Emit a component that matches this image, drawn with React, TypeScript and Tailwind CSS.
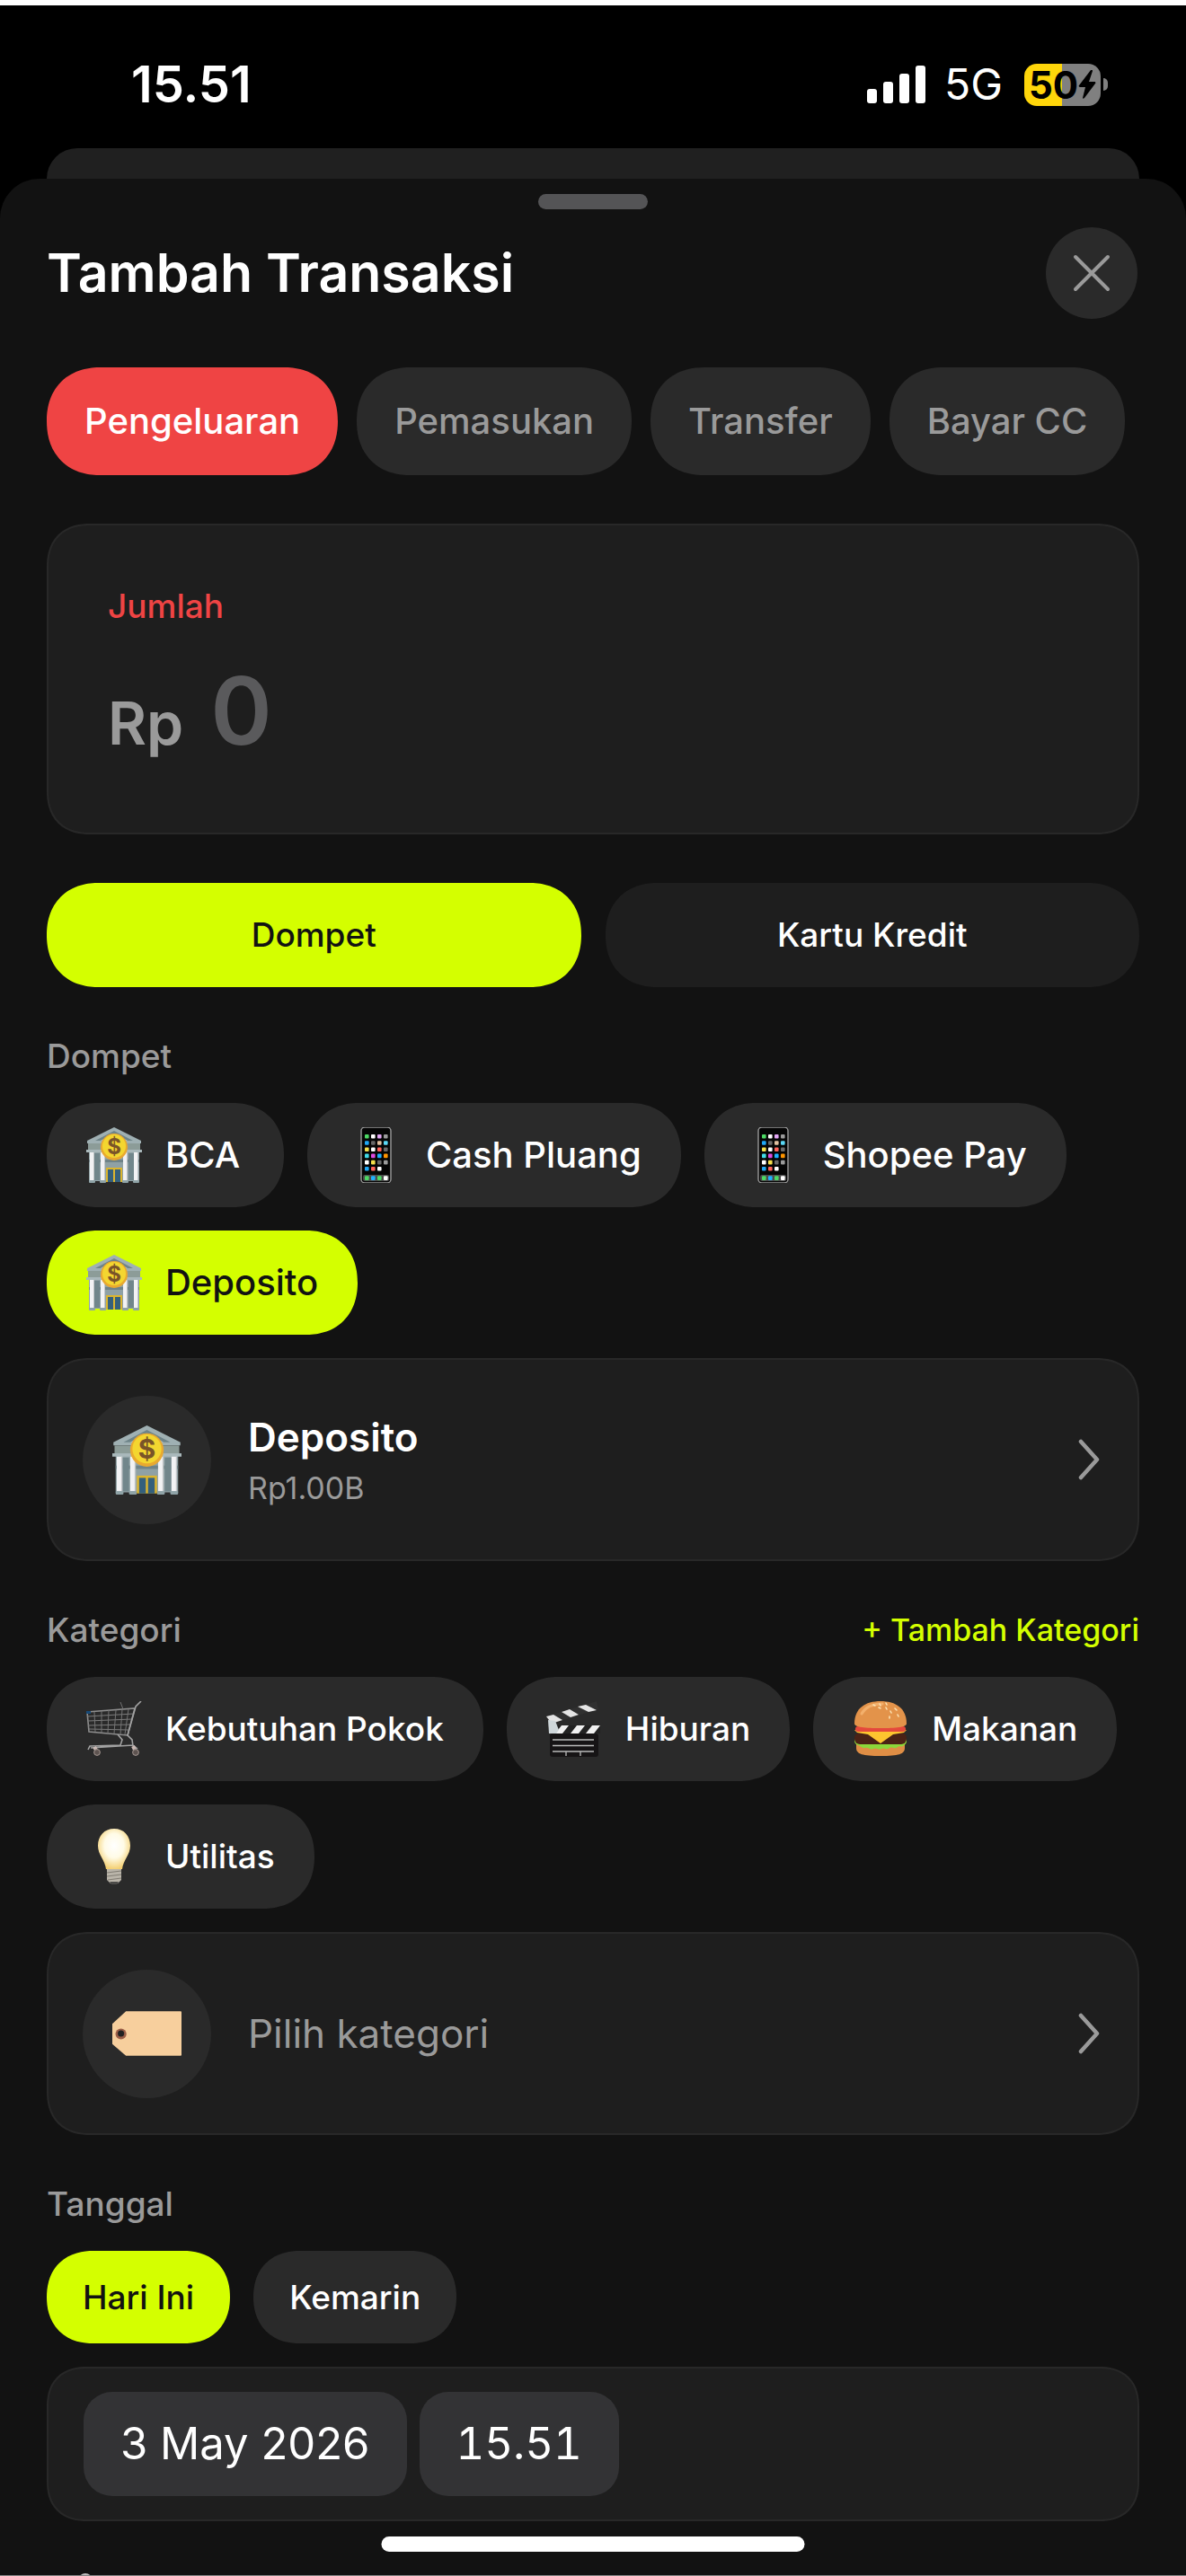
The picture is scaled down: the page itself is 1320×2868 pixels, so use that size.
import React, { useState } from 'react';

const FONT = 'font-["Inter","Liberation_Sans",sans-serif]';

const BankIcon = ({ className }: { className?: string }) => (
  <svg viewBox="0 0 62 62" className={className} aria-hidden="true">
    <rect x="3" y="27" width="56" height="33" fill="#8fa1a5" />
    <rect x="3" y="36" width="56" height="3" fill="#6f8388" />
    <rect x="9" y="29" width="6" height="30" fill="#71868b" />
    <rect x="47" y="29" width="6" height="30" fill="#71868b" />
    <path d="M31 0 61 15v3H1v-3Z" fill="#9fb0b3" />
    <path d="M31 4 52 15H10Z" fill="#6e8489" />
    <path d="M31 7 46 15H16Z" fill="#b9c7c9" />
    <rect x="2" y="18" width="58" height="8" fill="#8c9c98" />
    <rect x="0" y="25" width="62" height="3" fill="#a9b8bb" />
    {[4, 16, 41, 53].map((x) => (
      <g key={x}>
        <rect x={x} y="28" width="5" height="31" fill="#f2f2f4" />
        <rect x={x + 4} y="28" width="1" height="31" fill="#c3c6c9" />
        <rect x={x - 1} y="59" width="7" height="3" rx="1" fill="#8fa3a7" />
      </g>
    ))}
    <rect x="22" y="45" width="18" height="16" fill="#dcb52e" />
    <rect x="24" y="47" width="6" height="14" fill="#34607c" />
    <rect x="32" y="47" width="6" height="14" fill="#34607c" />
    <circle cx="31" cy="22" r="15" fill="#e9a92f" />
    <circle cx="31" cy="21" r="13" fill="#f3d630" />
    <text x="31" y="30" textAnchor="middle" fontSize="24" fontWeight="700" fill="#7a5428">$</text>
  </svg>
);

const APP_ROWS = [
  ['#4cd964', '#fff', '#e3a6f5', '#9b9b9b'],
  ['#1fa7f5', '#666', '#e0c0a0', '#5ad8f5'],
  ['#f6e04b', '#fff', '#ff6259', '#6b6b6b'],
  ['#41dbe8', '#e04be0', '#1fb0ff', '#ff9500'],
  ['#fff', '#f6e04b', '#666', '#9b9b9b'],
  ['#1fa7f5', '#ff6259', '#fff'],
];

const PhoneIcon = ({ className }: { className?: string }) => (
  <svg viewBox="-15 0 62 62" className={className} aria-hidden="true">
    <rect x="1" y="0" width="33" height="62" rx="4" fill="#050505" stroke="#9b9b9b" strokeWidth="1.4" />
    <rect x="3" y="53" width="29" height="7" rx="2" fill="#4a4a4a" />
    {APP_ROWS.map((row, r) =>
      row.map((color, c) => (
        <rect key={`${r}-${c}`} x={5 + c * 7} y={8 + r * 7.2} width="4.6" height="4.6" rx="1" fill={color} />
      ))
    )}
    {['#4cd964', '#1fb0ff', '#4cd964', '#fff'].map((color, c) => (
      <rect key={c} x={5 + c * 7} y="54.3" width="4.6" height="4.6" rx="1" fill={color} />
    ))}
  </svg>
);

const CartIcon = ({ className }: { className?: string }) => (
  <svg viewBox="0 0 62 62" className={className} fill="none" aria-hidden="true">
    <path d="M1 12 54 8 46 38 3 34Z" stroke="#8d8d8d" strokeWidth="1.6" />
    <path d="M1 17 53 14M2 22 51 20M2 27 50 26M3 31 48 32" stroke="#7c7c7c" strokeWidth="1.1" />
    <path d="M9 12 10 34M17 11 17 35M25 10 24 36M33 10 31 36M40 9 38 37M47 9 43 37M38 1l3 8" stroke="#747474" strokeWidth="1" />
    <path d="M61 0 55 6 46 38 51 43 52 50M35 37 40 43 38 49 4 50 2 54M5 52 52 49 57 53" stroke="#a2a2a2" strokeWidth="1.6" />
    <rect x="0" y="11" width="5" height="3" fill="#164a78" />
    <path d="M9 51 12 56M52 50 55 56" stroke="#c9b8b3" strokeWidth="4" />
    <circle cx="12" cy="57" r="3.4" fill="#5d5350" stroke="#a39691" />
    <circle cx="55" cy="57" r="3.4" fill="#5d5350" stroke="#a39691" />
  </svg>
);

const ClapperIcon = ({ className }: { className?: string }) => (
  <svg viewBox="0 0 62 62" className={className} aria-hidden="true">
    <path d="M0 17 56 0 58 9 6 25Z" fill="#303030" />
    <path d="M0 17 8 15 18 21 6 25ZM17 12 26 9 36 15 27 18ZM35 6 44 4 56 10 47 12Z" fill="#e4e4e4" />
    <rect x="4" y="27" width="56" height="9" fill="#222" />
    <path d="M17 27h8l-7 9h-8ZM34 27h9l-7 9h-9ZM51 27h9l-7 9h-9Z" fill="#f1f1f1" />
    <path d="M2 21 10 22 14 32 11 36H3Z" fill="#cfd7da" />
    <rect x="4" y="36" width="54" height="26" rx="3" fill="#161415" />
    <path d="M7 43h46M7 49.5h46M7 56h46M22 56v5M38 56v5" stroke="#bbb" strokeWidth="1.3" />
  </svg>
);

const BurgerIcon = ({ className }: { className?: string }) => (
  <svg viewBox="-2 0 62 62" className={className} aria-hidden="true">
    <path d="M2 46h54v6c0 7-7 9-27 9S2 59 2 52Z" fill="#df8e45" />
    <path d="M1 41h56c2 3 1 7-2 8-2 3-5 0-7 2-3 3-6-1-9 1-3 3-6-1-9 1-3 2-6-2-9 0-3 2-6-2-9-1-3 1-5-2-8-3-4-1-5-5-3-8Z" fill="#8bd83a" />
    <rect x="0" y="35" width="58" height="13" rx="6" fill="#4a2216" />
    <path d="M0 32h58l-3 3-12 2-14 10-14-10-12-2Z" fill="#fdc52f" />
    <rect x="1" y="28" width="56" height="6" rx="3" fill="#e5483c" />
    <path d="M0 25C0 8 12 0 29 0s29 8 29 25c0 4-12 5-29 5S0 29 0 25Z" fill="#e3934a" />
    <path d="M8 14C13 5 22 3 31 3" stroke="#f3b06c" strokeWidth="3" fill="none" strokeLinecap="round" />
    <path d="m21 4 2 1m5-2 1 2m6-3 1 2m-9 3 2 1m6-1 1 2m4 2 1 2m4-5 2 2m-8 7v2m9-4 1 2" stroke="#fbe1b2" strokeWidth="1.6" strokeLinecap="round" />
  </svg>
);

const BulbIcon = ({ className }: { className?: string }) => (
  <svg viewBox="-12 0 62 62" className={className} aria-hidden="true">
    <defs>
      <radialGradient id="bulb-glow" cx="50%" cy="42%" r="60%">
        <stop offset="0" stopColor="#fff" />
        <stop offset="0.5" stopColor="#fffbe6" />
        <stop offset="1" stopColor="#f3cd6c" />
      </radialGradient>
    </defs>
    <path d="M19 0c11 0 18 8 18 19 0 10-8 16-9 26H10C9 35 1 29 1 19 1 8 8 0 19 0Z" fill="url(#bulb-glow)" />
    <path d="M11 45h16v12l-4 4h-8l-4-4Z" fill="#b9b4a9" />
    <path d="m11 49 16-2m-16 6 16-2m-15 6 15-2" stroke="#827d74" strokeWidth="1.2" />
    <path d="M14 59h10l-2 3h-6Z" fill="#4b4a48" />
  </svg>
);

const TagIcon = ({ className }: { className?: string }) => (
  <svg viewBox="0 0 76 76" className={className} aria-hidden="true">
    <path d="M15 13h60a1 1 0 0 1 1 1v47a1 1 0 0 1-1 1H15L0 49V27Z" fill="#f7cf9d" />
    <circle cx="9.5" cy="38" r="6" fill="#9c5f48" />
    <circle cx="9.5" cy="37.5" r="3.5" fill="#222" />
  </svg>
);

const ChevronRight = () => (
  <svg viewBox="0 0 24 46" className="h-[46px] w-[24px]" fill="none" stroke="#9a9a9a" strokeWidth="4.5" strokeLinecap="round" strokeLinejoin="round" aria-hidden="true">
    <path d="M3 3 21 23 3 43" />
  </svg>
);

const StatusBar = () => (
  <header className="flex h-[159px] shrink-0 items-center justify-between pt-[17px] pr-[87px] pl-[146px] text-white">
    <span className="text-[56px] leading-[64px] font-semibold">15.51</span>
    <div className="flex items-center">
      <svg viewBox="0 0 66 42" className="h-[42px] w-[66px]" fill="#fff" aria-hidden="true">
        <rect x="0" y="26" width="11" height="16" rx="3" />
        <rect x="18" y="18" width="11" height="24" rx="3" />
        <rect x="36" y="9" width="11" height="33" rx="3" />
        <rect x="54" y="0" width="11" height="42" rx="3" />
      </svg>
      <span className="ml-5 text-[48px] leading-[56px]">5G</span>
      <div className="ml-6 flex h-[47px] w-[85px] items-center justify-center rounded-[14px] bg-[linear-gradient(90deg,#ffd60a_50%,#808080_50%)] text-[42px] leading-[47px] font-bold text-black">
        50
        <svg viewBox="0 0 20 32" className="h-[32px] w-[20px]" aria-hidden="true">
          <path d="M14 0 1 17c-1 1 0 2 1 2h6L5 31c0 1 1 1 2 0L19 15c1-1 0-2-1-2h-6l4-12c0-1-1-2-2-1Z" />
        </svg>
      </div>
      <span className="ml-[3px] h-[14px] w-[5px] rounded-r-full bg-[#808080]" />
    </div>
  </header>
);

interface ChipProps {
  label: string;
  icon?: React.FC<{ className?: string }>;
  active?: boolean;
  large?: boolean;
  onClick: () => void;
}

const IconChip: React.FC<ChipProps> = ({ label, icon: Icon, active, large, onClick }) => (
  <button
    type="button"
    aria-pressed={active}
    onClick={onClick}
    className={`flex h-[116px] min-w-[264px] items-center gap-[26px] rounded-full px-[44px] font-medium [corner-shape:superellipse(1.15)] ${
      large ? 'text-[40px]' : 'text-[37px]'
    } ${active ? 'bg-[#d4ff00] text-[#121212]' : 'bg-[#2a2a2a] text-white'}`}
  >
    {Icon && <Icon className="size-[62px]" />}
    {label}
  </button>
);

interface PickerRowProps {
  icon: React.FC<{ className?: string }>;
  title: string;
  subtitle?: string;
}

const PickerRow: React.FC<PickerRowProps> = ({ icon: Icon, title, subtitle }) => (
  <button
    type="button"
    className="mt-[26px] flex h-[226px] w-full items-center rounded-[48px] border-2 border-[#282828] bg-[#1e1e1e] pr-[42px] pl-[38px] text-left [corner-shape:superellipse(1.2)]"
  >
    <span className="flex size-[143px] items-center justify-center rounded-full bg-[#2a2a2a]">
      <Icon className="size-[77px]" />
    </span>
    <span className="ml-[41px] flex flex-1 flex-col">
      {subtitle ? (
        <>
          <span className="pt-1 text-[44px] leading-[60px] font-semibold text-white">{title}</span>
          <span className="text-[34px] leading-[54px] text-[#9a9a9a]">{subtitle}</span>
        </>
      ) : (
        <span className="text-[44px] leading-[60px] text-[#9a9a9a]">{title}</span>
      )}
    </span>
    <ChevronRight />
  </button>
);

const TYPES = ['Pengeluaran', 'Pemasukan', 'Transfer', 'Bayar CC'];
const SOURCES = ['Dompet', 'Kartu Kredit'];
const WALLETS = [
  { label: 'BCA', icon: BankIcon },
  { label: 'Cash Pluang', icon: PhoneIcon },
  { label: 'Shopee Pay', icon: PhoneIcon },
  { label: 'Deposito', icon: BankIcon },
];
const CATEGORIES = [
  { label: 'Kebutuhan Pokok', icon: CartIcon },
  { label: 'Hiburan', icon: ClapperIcon },
  { label: 'Makanan', icon: BurgerIcon },
  { label: 'Utilitas', icon: BulbIcon },
];
const DAYS = ['Hari Ini', 'Kemarin'];

export default function App() {
  const [type, setType] = useState('Pengeluaran');
  const [source, setSource] = useState('Dompet');
  const [wallet, setWallet] = useState('Deposito');
  const [category, setCategory] = useState('');
  const [day, setDay] = useState('Hari Ini');
  const [amount, setAmount] = useState('');

  const selectedCategory = CATEGORIES.find((c) => c.label === category);
  const selectedWallet = WALLETS.find((w) => w.label === wallet) ?? WALLETS[0];

  return (
    <div className={`relative flex h-screen flex-col overflow-hidden border-t-[6px] border-b border-t-white border-b-[#858585] bg-black ${FONT}`}>
      <StatusBar />
      <div className="mx-[52px] h-[34px] shrink-0 rounded-t-[40px] bg-[#202020]" />

      <main className="flex min-h-0 flex-1 flex-col overflow-hidden rounded-t-[44px] bg-[#121212] px-[52px]">
        <div className="mx-auto mt-[17px] h-[17px] w-[122px] shrink-0 rounded-full bg-[#545456]" />

        <div className="mt-5 flex h-[102px] shrink-0 items-center justify-between pr-0.5">
          <h1 className="text-[59px] leading-[72px] font-semibold text-white">Tambah Transaksi</h1>
          <button type="button" aria-label="Tutup" className="flex size-[102px] items-center justify-center rounded-full bg-[#2a2a2a]">
            <svg viewBox="0 0 42 42" className="size-[42px]" stroke="#9a9a9a" strokeWidth="4" strokeLinecap="round" aria-hidden="true">
              <path d="M3 3 39 39M39 3 3 39" />
            </svg>
          </button>
        </div>

        <div className="mt-[54px] flex shrink-0 gap-[21px]">
          {TYPES.map((t) => (
            <button
              key={t}
              type="button"
              aria-pressed={t === type}
              onClick={() => setType(t)}
              className={`h-[120px] rounded-full px-[42px] text-[40px] font-medium whitespace-nowrap [corner-shape:superellipse(1.15)] ${
                t === type ? 'bg-[#ef4444] text-white' : 'bg-[#2a2a2a] text-[#9a9a9a]'
              }`}
            >
              {t}
            </button>
          ))}
        </div>

        <div className="mt-[54px] flex h-[346px] shrink-0 flex-col rounded-[48px] border-2 border-[#282828] bg-[#1e1e1e] px-[66px] pt-[64px] [corner-shape:superellipse(1.2)]">
          <label htmlFor="amount" className="text-[37px] leading-[52px] font-medium text-[#ef4444]">
            Jumlah
          </label>
          <div className="mt-[24px] flex items-baseline gap-[30px]">
            <span className="text-[66px] leading-[132px] font-semibold text-[#9a9a9a]">Rp</span>
            <input
              id="amount"
              inputMode="numeric"
              placeholder="0"
              value={amount}
              onChange={(e) => setAmount(e.target.value)}
              className="h-[132px] min-w-0 flex-1 bg-transparent text-[104px] leading-[132px] font-semibold text-white outline-none placeholder:text-[#5a5a5c]"
            />
          </div>
        </div>

        <div className="mt-[54px] grid shrink-0 grid-cols-2 gap-[27px]">
          {SOURCES.map((s) => (
            <button
              key={s}
              type="button"
              aria-pressed={s === source}
              onClick={() => setSource(s)}
              className={`h-[116px] rounded-full text-[37px] font-medium [corner-shape:superellipse(1.15)] ${
                s === source ? 'bg-[#d4ff00] text-[#121212]' : 'bg-[#1e1e1e] text-white'
              }`}
            >
              {s}
            </button>
          ))}
        </div>

        <section className="mt-[51px] shrink-0">
          <h2 className="text-[37px] leading-[52px] font-medium text-[#9a9a9a]">Dompet</h2>
          <div className="mt-[26px] flex flex-wrap gap-[26px]">
            {WALLETS.map((w) => (
              <IconChip key={w.label} {...w} large active={w.label === wallet} onClick={() => setWallet(w.label)} />
            ))}
          </div>
          <PickerRow icon={selectedWallet.icon} title={selectedWallet.label} subtitle="Rp1.00B" />
        </section>

        <section className="mt-[51px] shrink-0">
          <div className="flex items-center justify-between">
            <h2 className="text-[37px] leading-[52px] font-medium text-[#9a9a9a]">Kategori</h2>
            <button type="button" className="text-[34px] leading-[52px] font-medium text-[#d4ff00]">
              + Tambah Kategori
            </button>
          </div>
          <div className="mt-[26px] flex flex-wrap gap-[26px]">
            {CATEGORIES.map((c) => (
              <IconChip key={c.label} {...c} active={c.label === category} onClick={() => setCategory(c.label)} />
            ))}
          </div>
          <PickerRow icon={selectedCategory?.icon ?? TagIcon} title={selectedCategory?.label ?? 'Pilih kategori'} />
        </section>

        <section className="mt-[51px] shrink-0">
          <h2 className="text-[37px] leading-[52px] font-medium text-[#9a9a9a]">Tanggal</h2>
          <div className="mt-[26px] flex gap-[26px]">
            {DAYS.map((d) => (
              <button
                key={d}
                type="button"
                aria-pressed={d === day}
                onClick={() => setDay(d)}
                className={`h-[103px] rounded-full px-[40px] text-[37px] font-medium [corner-shape:superellipse(1.15)] ${
                  d === day ? 'bg-[#d4ff00] text-[#121212]' : 'bg-[#2a2a2a] text-white'
                }`}
              >
                {d}
              </button>
            ))}
          </div>
          <div className="mt-[26px] flex h-[172px] items-center gap-[14px] rounded-[44px] border-2 border-[#282828] bg-[#1e1e1e] px-[39px] [corner-shape:superellipse(1.2)]">
            <button type="button" className="h-[116px] rounded-[32px] bg-[#333335] px-[41px] text-[49px] text-white">
              3 May 2026
            </button>
            <button type="button" className="h-[116px] rounded-[32px] bg-[#333335] px-[41px] text-[49px] text-white tabular-nums">
              15.51
            </button>
          </div>
        </section>

        <div className="mt-[58px] shrink-0 pl-6">
          <svg viewBox="0 0 39 39" className="size-[39px]" fill="#c0c0c0" aria-hidden="true">
            <circle cx="19" cy="8" r="8" />
            <path d="M3 39c0-12 6-19 16-19s16 7 16 19Z" />
          </svg>
        </div>
      </main>

      <div className="absolute bottom-[26px] left-1/2 h-[17px] w-[471px] -translate-x-1/2 rounded-full bg-white" />
    </div>
  );
}
